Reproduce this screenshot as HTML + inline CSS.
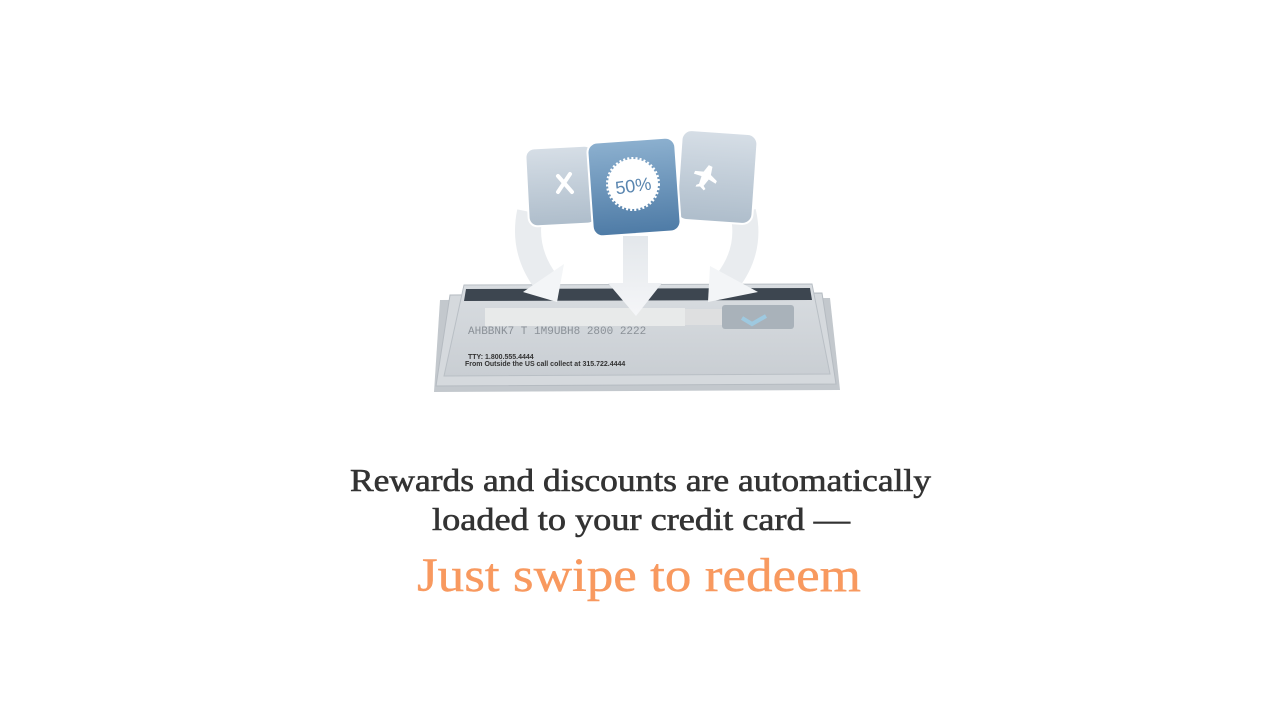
<!DOCTYPE html>
<html><head><meta charset="utf-8"><style>
html,body{margin:0;padding:0;background:#fff;width:1280px;height:720px;overflow:hidden}
svg{display:block}
</style></head><body>
<svg width="1280" height="720" viewBox="0 0 1280 720" xmlns="http://www.w3.org/2000/svg">
<defs>
<linearGradient id="card" x1="0" y1="0" x2="0" y2="1"><stop offset="0" stop-color="#d9dde1"/><stop offset="1" stop-color="#c9ced3"/></linearGradient>
<linearGradient id="tileL" x1="0" y1="0" x2="0" y2="1"><stop offset="0" stop-color="#d6dee6"/><stop offset="1" stop-color="#aebdcb"/></linearGradient>
<linearGradient id="tileM" x1="0" y1="0" x2="0" y2="1"><stop offset="0" stop-color="#8cb0cf"/><stop offset="1" stop-color="#4e7ba6"/></linearGradient>
<linearGradient id="arr" x1="0" y1="0" x2="0" y2="1"><stop offset="0" stop-color="#e3e7eb"/><stop offset="1" stop-color="#f5f6f8"/></linearGradient>
</defs>
<polygon points="440,300 830,298 840,390 434,392" fill="#c3c8cd"/>
<polygon points="450,295 822,293 836,384 436,386" fill="#d5d9dd" stroke="#b5bbc1"/>
<polygon points="464,285 812,284 830,374 444,376" fill="url(#card)" stroke="#b9bfc5"/>
<polygon points="466,289 810,288 812,300 464,301" fill="#3d4650"/>
<rect x="485" y="308" width="200" height="18" fill="#e8eaea"/>
<rect x="685" y="309" width="60" height="16" fill="#dedfe0"/>
<rect x="722" y="305" width="72" height="24" rx="3" fill="#a9b2ba"/>
<path d="M742 318 l10 6 l14 -8" stroke="#9ec9e0" stroke-width="4" fill="none"/>
<text x="468" y="334" font-family="Liberation Mono,monospace" font-size="11" fill="#8a9097">AHBBNK7 T 1M9UBH8 2800 2222</text>
<text x="468" y="359" font-family="Liberation Sans,sans-serif" font-size="7" font-weight="bold" fill="#333">TTY: 1.800.555.4444</text>
<text x="465" y="366" font-family="Liberation Sans,sans-serif" font-size="7" font-weight="bold" fill="#333">From Outside the US call collect at 315.722.4444</text>
<path d="M530 212 Q522 250 546 282" stroke="#e9ecef" stroke-width="26" fill="none"/>
<polygon points="523,292 564,264 557,302" fill="#f3f5f7"/>
<path d="M623 236 L648 236 L648 283 L662 283 L636 316 L608 283 L623 283 Z" fill="url(#arr)"/>
<path d="M743 212 Q752 250 727 282" stroke="#e9ecef" stroke-width="26" fill="none"/>
<polygon points="758,292 710,266 708,302" fill="#f3f5f7"/>
<rect x="527" y="147" width="68" height="78" rx="9" fill="url(#tileL)" stroke="#fff" stroke-width="2" transform="rotate(-3 561 186)"/>
<rect x="679" y="132" width="76" height="90" rx="10" fill="url(#tileL)" stroke="#fff" stroke-width="2" transform="rotate(4 717 177)"/>
<path d="M558 176 l14 16 M570 174 l-12 18" stroke="#fff" stroke-width="4" stroke-linecap="round"/>
<path d="M704 165 l4 0 l2 8 l8 3 l0 3 l-8 -1 l-2 8 l3 2 l-1 2 l-5 -2 l-4 2 l0 -2 l2 -2 l-1 -8 l-8 1 l0 -3 l8 -3 z" fill="#fff" transform="rotate(25 706 176)"/>
<rect x="590" y="140" width="88" height="94" rx="10" fill="url(#tileM)" stroke="#fff" stroke-width="2" transform="rotate(-4 634 187)"/>
<circle cx="633" cy="184" r="25" fill="#fff" stroke="#fff" stroke-width="4" stroke-dasharray="2 2"/>
<text x="633" y="192" text-anchor="middle" font-family="Liberation Sans,sans-serif" font-size="18" fill="#5a86b0" transform="rotate(-8 633 184)">50%</text>
<text x="350" y="491" textLength="581" lengthAdjust="spacingAndGlyphs" font-family="Liberation Serif,serif" font-size="32" fill="#333" stroke="#333" stroke-width="0.6">Rewards and discounts are automatically</text>
<text x="432" y="530" textLength="418" lengthAdjust="spacingAndGlyphs" font-family="Liberation Serif,serif" font-size="32" fill="#333" stroke="#333" stroke-width="0.6">loaded to your credit card —</text>
<text x="417" y="591" textLength="444" lengthAdjust="spacingAndGlyphs" font-family="Liberation Serif,serif" font-size="48" fill="#f8995f" stroke="#f8995f" stroke-width="0.4">Just swipe to redeem</text>
</svg>
</body></html>
